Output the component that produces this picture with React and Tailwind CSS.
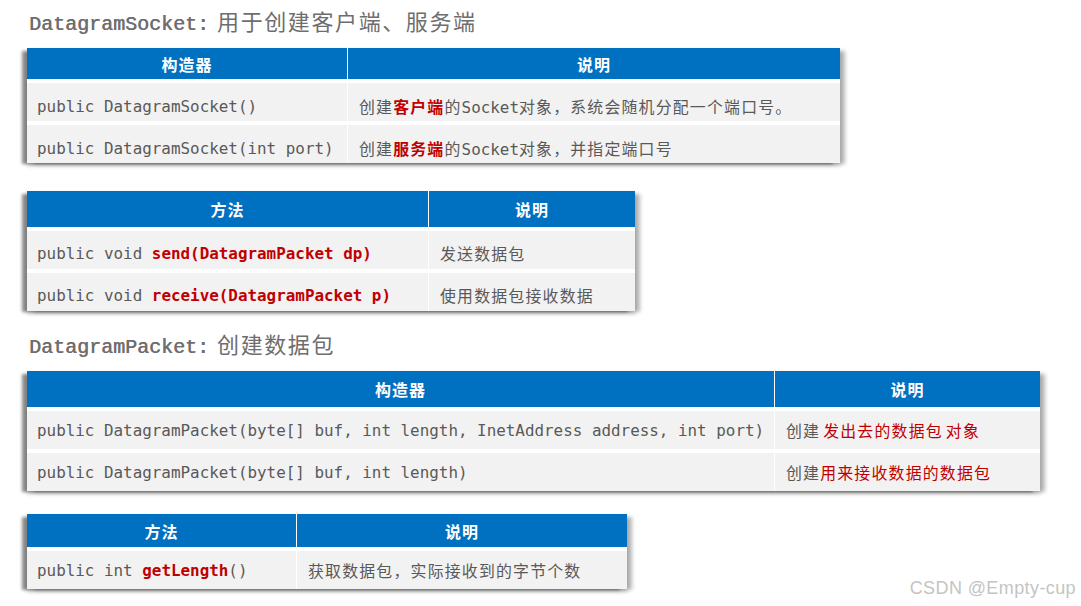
import React from 'react';

// shared bits
const MONO = "font-['DejaVu_Sans_Mono','Noto_Sans_CJK_SC',monospace]";
const Red = ({ children }) => <span className="font-bold text-[#c00000]">{children}</span>;
const Zh = ({ children, className = '' }) => (
  <span className={`font-['Noto_Sans_CJK_SC',sans-serif] tracking-[1.2px] ${className}`}>{children}</span>
);

const Title = ({ latin, zh, className = '' }) => (
  <div className={`pl-[29px] h-[28px] leading-[28px] text-[20px] text-[#6e6e6e] whitespace-nowrap ${className}`}>
    <span className="font-['Liberation_Mono',monospace] [text-shadow:0.5px_0_0_#6e6e6e]">{latin}</span>
    <span className="ml-[8px] font-['Noto_Sans_CJK_SC',sans-serif] text-[22px] tracking-[1.6px]">{zh}</span>
  </div>
);

const Table = ({ width, col, headH, pad, head, rows, className = '' }) => (
  <div
    className={`ml-[27px] bg-white flex flex-col gap-[4px] shadow-[-6px_2px_3px_-1px_rgba(0,0,0,0.45),6px_2px_4px_-1px_rgba(0,0,0,0.28),0_3px_4px_rgba(0,0,0,0.2)] ${className}`}
    style={{ width }}
  >
    <div className="grid gap-x-px" style={{ gridTemplateColumns: `${col}px 1fr`, height: headH }}>
      {head.map((h) => (
        <div key={h} className="bg-[#0070c0] flex items-center justify-center text-white font-bold text-[16px] tracking-[1px] font-['Noto_Sans_CJK_SC',sans-serif]">
          {h}
        </div>
      ))}
    </div>
    {rows.map((r, i) => (
      <div key={i} className="grid gap-x-px h-[38px]" style={{ gridTemplateColumns: `${col}px 1fr` }}>
        <div className={`bg-[#f2f2f2] pl-[10px] ${MONO} text-[15.9px] leading-[20px] text-[#595959] whitespace-nowrap`} style={{ paddingTop: pad }}>
          {r[0]}
        </div>
        <div className={`bg-[#f2f2f2] pl-[11px] ${MONO} text-[15.9px] leading-[20px] text-[#595959] whitespace-nowrap`} style={{ paddingTop: pad }}>
          {r[1]}
        </div>
      </div>
    ))}
  </div>
);

export default function App() {
  return (
    <div className="relative w-[1081px] h-[606px] bg-white overflow-hidden">
      <div className="flex flex-col pt-[6px]">
        <Title latin="DatagramSocket:" zh="用于创建客户端、服务端" />

        <Table
          className="mt-[14px]"
          width={813}
          col={320}
          headH={31}
          pad={14}
          head={['构造器', '说明']}
          rows={[
            [
              'public DatagramSocket()',
              <>
                <Zh>创建</Zh><Zh><Red>客户端</Red>的</Zh>Socket<Zh>对象，系统会随机分配一个端口号。</Zh>
              </>,
            ],
            [
              'public DatagramSocket(int port)',
              <>
                <Zh>创建</Zh><Zh><Red>服务端</Red>的</Zh>Socket<Zh>对象，并指定端口号</Zh>
              </>,
            ],
          ]}
        />

        <Table
          className="mt-[28px]"
          width={608}
          col={401}
          headH={36}
          pad={13}
          head={['方法', '说明']}
          rows={[
            [<>public void <Red>send(DatagramPacket dp)</Red></>, <Zh>发送数据包</Zh>],
            [<>public void <Red>receive(DatagramPacket p)</Red></>, <Zh>使用数据包接收数据</Zh>],
          ]}
        />

        <Title className="mt-[18px]" latin="DatagramPacket:" zh="创建数据包" />

        <Table
          className="mt-[14px]"
          width={1013}
          col={747}
          headH={36}
          pad={10}
          head={['构造器', '说明']}
          rows={[
            [
              'public DatagramPacket(byte[] buf, int length, InetAddress address, int port)',
              <>
                <Zh>创建</Zh>
                <Zh className="ml-[3px] text-[#c00000]">发出去的数据包</Zh>
                <Zh className="ml-[3px] text-[#c00000]">对象</Zh>
              </>,
            ],
            [
              'public DatagramPacket(byte[] buf, int length)',
              <>
                <Zh>创建</Zh><Zh className="text-[#c00000]">用来接收数据的数据包</Zh>
              </>,
            ],
          ]}
        />

        <Table
          className="mt-[23px]"
          width={600}
          col={269}
          headH={33}
          pad={10}
          head={['方法', '说明']}
          rows={[[<>public int <Red>getLength</Red>()</>, <Zh>获取数据包，实际接收到的字节个数</Zh>]]}
        />
      </div>

      {/* watermark */}
      <div className="absolute right-[5px] top-[578px] leading-[20px] text-[18px] tracking-[0.4px] font-['Liberation_Sans',Arial,sans-serif] text-[#c4c4c4] [text-shadow:0_0_2px_#fff,1px_1px_0_#fff]">
        CSDN @Empty-cup
      </div>
    </div>
  );
}
